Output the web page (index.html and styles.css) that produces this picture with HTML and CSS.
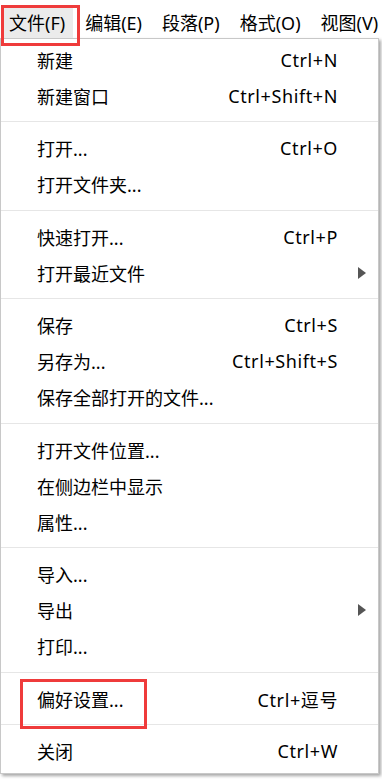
FILE: index.html
```html
<!DOCTYPE html>
<html lang="zh-CN">
<head>
  <meta charset="UTF-8" />
  <meta name="viewport" content="width=device-width, initial-scale=1.0" />
  <title>文件菜单</title>
  <link rel="stylesheet" href="styles.css">
</head>
<body>
  <div class="menubar">
    <span class="menubar-item active">文件(F)</span>
    <span class="menubar-item">编辑(E)</span>
    <span class="menubar-item">段落(P)</span>
    <span class="menubar-item">格式(O)</span>
    <span class="menubar-item">视图(V)</span>
  </div>

  <div class="menu">
    <div class="group first">
      <div class="row"><span>新建</span><span class="key">Ctrl+N</span></div>
      <div class="row"><span>新建窗口</span><span class="key">Ctrl+Shift+N</span></div>
    </div>
    <div class="group">
      <div class="row"><span>打开...</span><span class="key">Ctrl+O</span></div>
      <div class="row"><span>打开文件夹...</span><span class="key"></span></div>
    </div>
    <div class="group">
      <div class="row"><span>快速打开...</span><span class="key">Ctrl+P</span></div>
      <div class="row"><span>打开最近文件</span><span class="key"></span><i class="arrow"></i></div>
    </div>
    <div class="group">
      <div class="row"><span>保存</span><span class="key">Ctrl+S</span></div>
      <div class="row"><span>另存为...</span><span class="key">Ctrl+Shift+S</span></div>
      <div class="row"><span>保存全部打开的文件...</span><span class="key"></span></div>
    </div>
    <div class="group">
      <div class="row"><span>打开文件位置...</span><span class="key"></span></div>
      <div class="row"><span>在侧边栏中显示</span><span class="key"></span></div>
      <div class="row"><span>属性...</span><span class="key"></span></div>
    </div>
    <div class="group">
      <div class="row"><span>导入...</span><span class="key"></span></div>
      <div class="row"><span>导出</span><span class="key"></span><i class="arrow"></i></div>
      <div class="row"><span>打印...</span><span class="key"></span></div>
    </div>
    <div class="group">
      <div class="row"><span>偏好设置...</span><span class="key">Ctrl+逗号</span></div>
    </div>
    <div class="group last">
      <div class="row"><span>关闭</span><span class="key">Ctrl+W</span></div>
    </div>
  </div>

  <!-- red annotation boxes -->
  <div class="mark mark-file"></div>
  <div class="mark mark-pref"></div>
</body>
</html>
```

FILE: styles.css
```css
body {
  margin: 0;
  background: #fff;
  font-family: "Noto Sans", "Noto Sans CJK SC", sans-serif;
  font-size: 18px;
  color: #000;
  position: relative;
  width: 382px;
  height: 779px;
  overflow: hidden;
}
.menubar {
  display: flex;
  height: 38px;
  padding: 7px 0 0 4px;
  box-sizing: border-box;
  gap: 7px;
}
.menubar-item {
  height: 31px;
  line-height: 33px;
  padding: 0 8px 0 5px;
  white-space: nowrap;
}
.menubar-item.active {
  background: #ebebeb;
}
.menu {
  width: 379px;
  height: 736px;
  box-sizing: border-box;
  border: 1px solid #c8c8c8;
  background: #fff;
  box-shadow: 2px 2px 3px rgba(0,0,0,0.35);
}
.group {
  padding: 8px 0 7.5px;
  border-bottom: 1px solid #e6e6e6;
}
.group.first {
  padding-top: 3px;
  padding-bottom: 7px;
}
.group.last {
  border-bottom: none;
}
.row {
  display: grid;
  grid-template-columns: 1fr auto 40px;
  align-items: center;
  height: 36px;
  padding-left: 36px;
  white-space: nowrap;
}
.key {
  text-align: right;
  letter-spacing: 0.6px;
}
.arrow {
  width: 0;
  height: 0;
  margin-left: 20px;
  border-left: 8px solid #555;
  border-top: 6px solid transparent;
  border-bottom: 6px solid transparent;
}
.mark {
  position: absolute;
  border: 3px solid #ef3b3b;
  box-sizing: border-box;
}
.mark-file {
  left: 1px;
  top: 5px;
  width: 79px;
  height: 41px;
}
.mark-pref {
  left: 20px;
  top: 679px;
  width: 127px;
  height: 50px;
}
```
